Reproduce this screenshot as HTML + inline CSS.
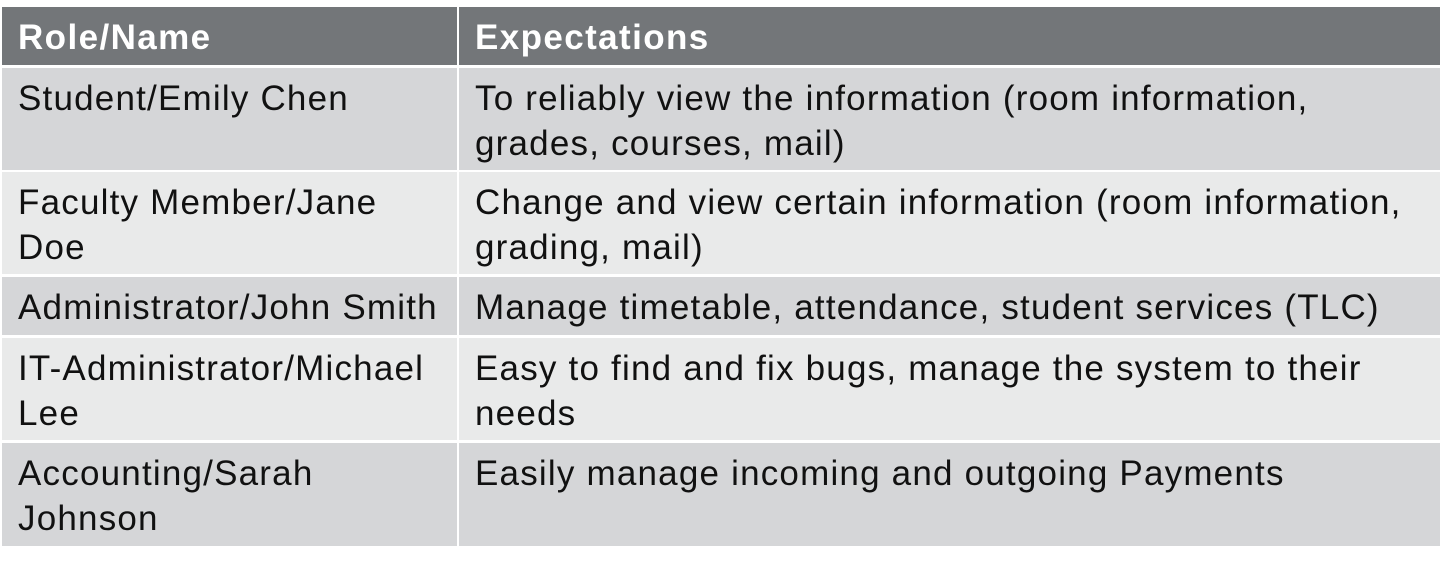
<!DOCTYPE html><html><head><style>
body{margin:0;width:1446px;height:563px;background:#fff;position:relative;font-family:"Liberation Sans",sans-serif;overflow:hidden}
.c{position:absolute;box-sizing:border-box;font-size:35px;letter-spacing:1.2px;line-height:45px;color:#111;padding-left:16px;padding-top:8px;white-space:nowrap}
.h{background:#737679;color:#fff;font-weight:bold;padding-top:10px;line-height:42px;letter-spacing:1.4px}
.d{background:#d5d6d8}.l{background:#e9eaea}
</style></head><body>
<div class="c h" style="left:2px;top:7px;width:455px;height:58px">Role/Name</div>
<div class="c h" style="left:459px;top:7px;width:981px;height:58px">Expectations</div>

<div class="c d" style="left:2px;top:68px;width:455px;height:102px">Student/Emily Chen</div>
<div class="c d" style="left:459px;top:68px;width:981px;height:102px">To reliably view the information (room information,<br>grades, courses, mail)</div>

<div class="c l" style="left:2px;top:172px;width:455px;height:102px">Faculty Member/Jane<br>Doe</div>
<div class="c l" style="left:459px;top:172px;width:981px;height:102px">Change and view certain information (room information,<br>grading, mail)</div>

<div class="c d" style="left:2px;top:277px;width:455px;height:58px">Administrator/John Smith</div>
<div class="c d" style="left:459px;top:277px;width:981px;height:58px">Manage timetable, attendance, student services (TLC)</div>

<div class="c l" style="left:2px;top:338px;width:455px;height:102px">IT-Administrator/Michael<br>Lee</div>
<div class="c l" style="left:459px;top:338px;width:981px;height:102px">Easy to find and fix bugs, manage the system to their<br>needs</div>

<div class="c d" style="left:2px;top:443px;width:455px;height:103px">Accounting/Sarah<br>Johnson</div>
<div class="c d" style="left:459px;top:443px;width:981px;height:103px">Easily manage incoming and outgoing Payments</div>
</body></html>
